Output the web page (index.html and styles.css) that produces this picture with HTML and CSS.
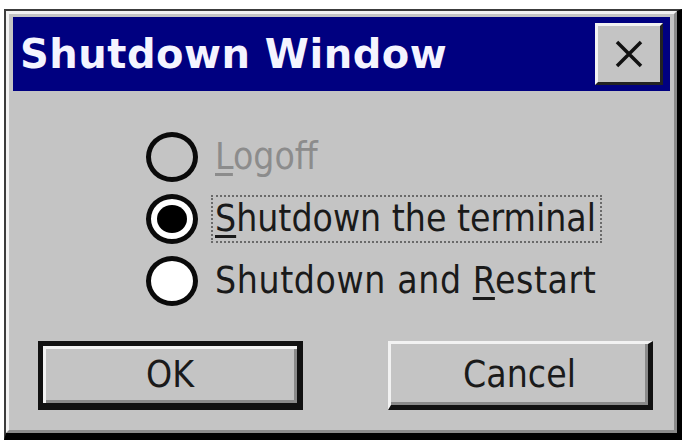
FILE: index.html
```html
<!DOCTYPE html>
<html>
<head>
<meta charset="utf-8">
<link rel="stylesheet" href="styles.css">
</head>
<body>
<div class="window">
  <div class="inner">
    <div class="titlebar">
      <span class="title">Shutdown Window</span>
      <div class="close">
        <svg width="30" height="30" viewBox="0 0 30 30"><path d="M3 3 L27 27 M27 3 L3 27" stroke="#111" stroke-width="3.5" fill="none"/></svg>
      </div>
    </div>
    <div class="client">
      <div class="options">
        <div class="row">
          <span class="radio"></span>
          <span class="label disabled"><u>L</u>ogoff</span>
        </div>
        <div class="row">
          <span class="radio checked"></span>
          <span class="label focus"><u>S</u>hutdown the terminal</span>
        </div>
        <div class="row">
          <span class="radio white"></span>
          <span class="label wide">Shutdown and <u>R</u>estart</span>
        </div>
      </div>
      <div class="buttons">
        <div class="btn default">OK</div>
        <div class="btn">Cancel</div>
      </div>
    </div>
  </div>
</div>
</body>
</html>
```
FILE: styles.css
```css
html, body {
  margin: 0;
  background: #ffffff;
}
body {
  padding: 9px 5px 3px 4px;
  font-family: "DejaVu Sans Condensed", "DejaVu Sans", sans-serif;
}
.window {
  width: 671px;
  height: 422px;
  border-top: 2px solid #3c3c3c;
  border-left: 2px solid #3c3c3c;
  border-right: 5px solid #000;
  border-bottom: 7px solid #000;
  display: flex;
}
.inner {
  flex: 1;
  display: flex;
  flex-direction: column;
  background: #c4c4c4;
  border-top: 3px solid #f2f2f2;
  border-left: 3px solid #f2f2f2;
  border-right: 3px solid #8a8a8a;
  border-bottom: 3px solid #8a8a8a;
}
.titlebar {
  margin: 3px 4px 0 4px;
  height: 74px;
  background: #000080;
  display: flex;
  align-items: center;
  justify-content: space-between;
  padding: 0 7px 0 7px;
}
.title {
  color: #f4f4ff;
  font-family: "DejaVu Sans", sans-serif;
  font-weight: bold;
  font-size: 40px;
  letter-spacing: 0.5px;
}
.close {
  width: 62px;
  height: 56px;
  background: #c4c4c4;
  border-top: 3px solid #f2f2f2;
  border-left: 3px solid #f2f2f2;
  border-right: 3px solid #222;
  border-bottom: 3px solid #222;
  display: flex;
  align-items: center;
  justify-content: center;
}
.client {
  flex: 1;
  display: flex;
  flex-direction: column;
}
.options {
  padding: 35px 0 0 137px;
  display: flex;
  flex-direction: column;
}
.row {
  height: 62px;
  display: flex;
  align-items: center;
}
.radio {
  width: 42px;
  height: 40px;
  border: 5px solid #0a0a0a;
  border-radius: 50%;
  margin-right: 13px;
  display: flex;
  align-items: center;
  justify-content: center;
}
.radio.white {
  background: #ffffff;
}
.radio.checked {
  background: #ffffff;
}
.radio.checked::after {
  content: "";
  width: 30px;
  height: 28px;
  border-radius: 50%;
  background: #000;
}
.label {
  font-size: 37px;
  color: #1a1a1a;
  border: 2px solid transparent;
  padding: 0 4px 0 2px;
  line-height: 44px;
}
.label.wide {
  letter-spacing: 0.6px;
}
.label u {
  text-decoration-thickness: 3px;
  text-underline-offset: 4px;
}
.label.disabled {
  color: #8c8c8c;
}
.label.focus {
  border: 2px dotted #6a6a6a;
}
.buttons {
  margin-top: 29px;
  padding-left: 29px;
  display: flex;
  gap: 85px;
}
.btn {
  box-sizing: border-box;
  width: 265px;
  height: 69px;
  display: flex;
  align-items: center;
  justify-content: center;
  font-size: 37px;
  color: #1a1a1a;
  border-top: 3px solid #f2f2f2;
  border-left: 3px solid #f2f2f2;
  border-right: 5px solid #111;
  border-bottom: 5px solid #111;
  box-shadow: inset -3px -3px 0 #8a8a8a;
}
.btn.default {
  border-top: 5px solid #111;
  border-left: 5px solid #111;
  border-right: 6px solid #111;
  border-bottom: 7px solid #111;
  box-shadow: inset 3px 3px 0 #f2f2f2, inset -3px -3px 0 #8a8a8a;
}
```
